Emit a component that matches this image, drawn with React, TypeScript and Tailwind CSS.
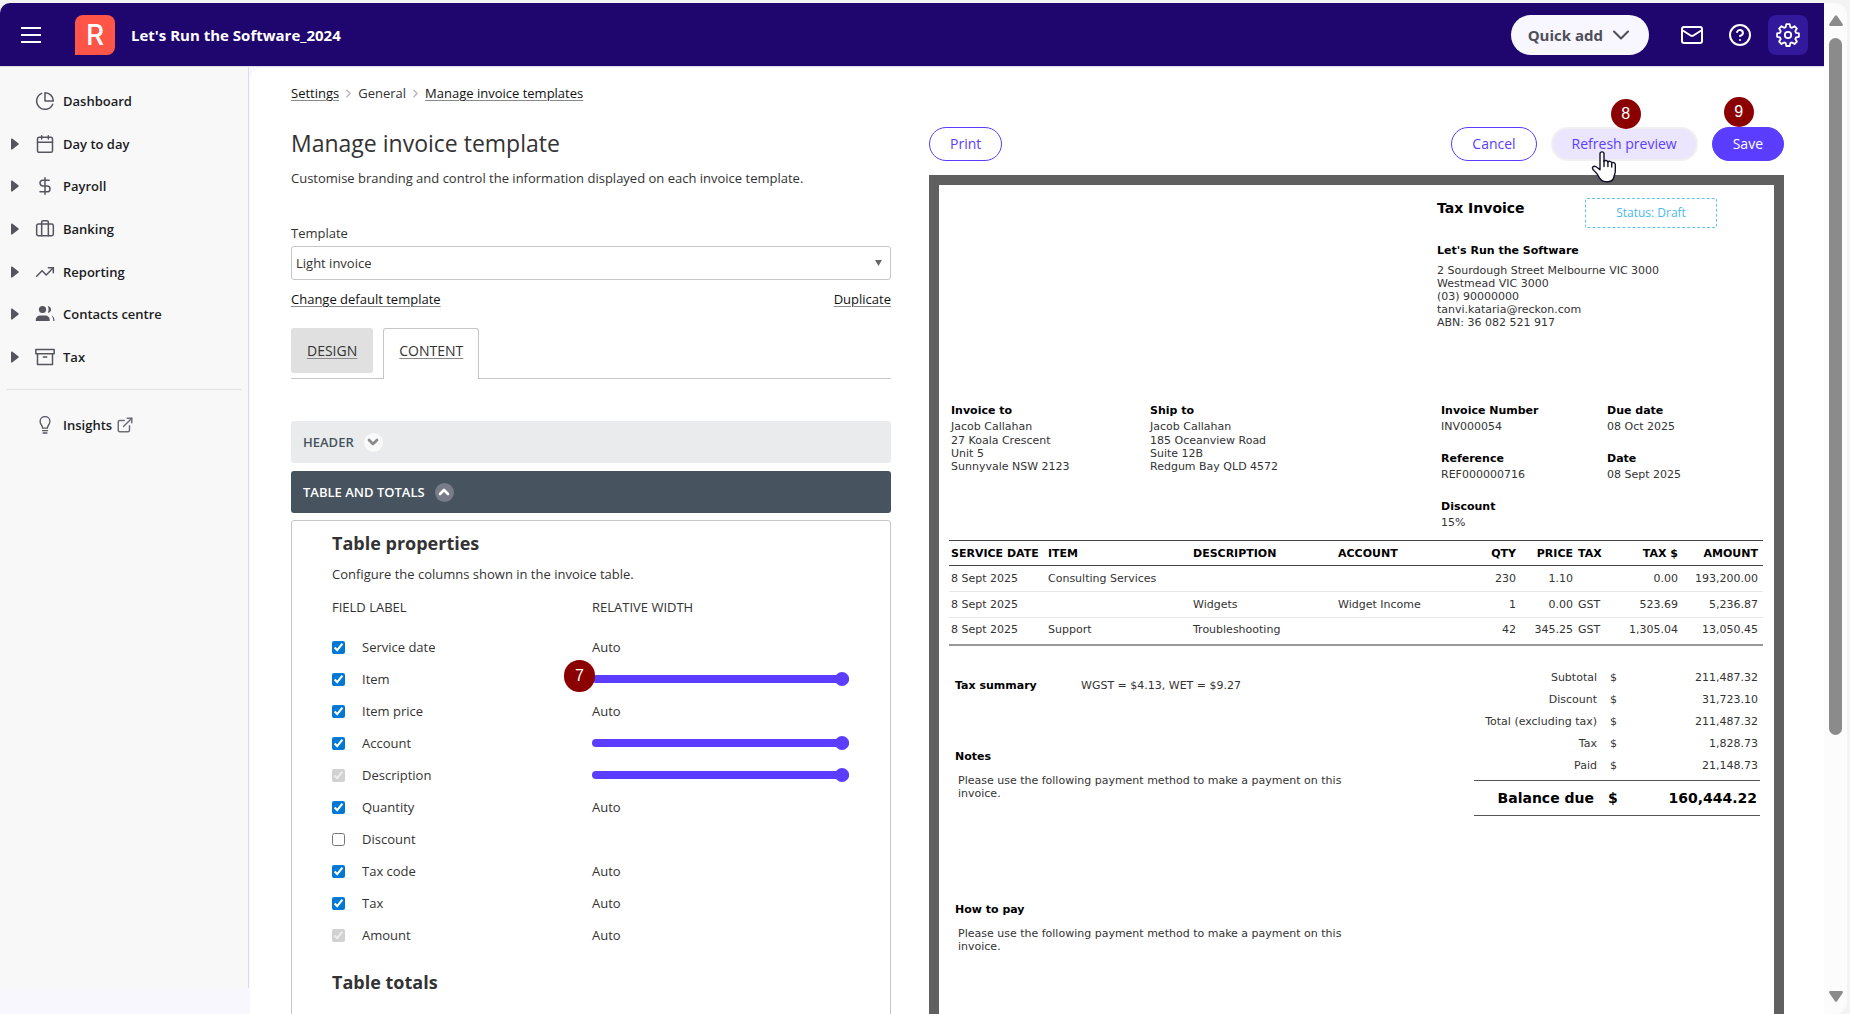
import {
	Briefcase,
	Calendar,
	ChevronDown,
	ChevronRight,
	ChevronUp,
	CircleQuestionMark,
	DollarSign,
	Mail,
	TrendingUp,
} from "lucide-react";
import { FiArchive, FiExternalLink, FiPieChart } from "react-icons/fi";

const navIcon = "size-5 shrink-0 text-[#55545f]";

const PeopleIcon = () => (
	<svg viewBox="0 0 20 20" className={navIcon} fill="currentColor" aria-hidden="true">
		<circle cx="7.500" cy="5.500" r="3.600" />
		<path d="M.8 17v-1.300c0-2.400 2-4.200 4.400-4.200h5.200c2.400 0 4.300 1.800 4.300 4.200V17z" />
		<path d="M12.800 2c2.200.3 3.200 1.800 3.200 3.600s-1 3.200-3.200 3.500c1.100-2.200 1.100-5 0-7.100z" />
		<path d="M16.600 11.500c1.900.9 2.900 2.700 2.900 5.500h-1.200c0-2.300-.5-4-1.700-5.500z" />
	</svg>
);

const BulbIcon = () => (
	<svg
		viewBox="0 0 20 20"
		className={navIcon}
		fill="none"
		stroke="currentColor"
		strokeWidth="1.3"
		strokeLinecap="round"
		aria-hidden="true"
	>
		<path d="M7.600 13.200c0-1.700-.6-2.600-1.500-3.700a5.200 5.200 0 0 1-1-3.200C5.100 3.600 7.200 1.700 10 1.700s4.900 1.900 4.900 4.600c0 1.300-.4 2.300-1 3.200-.9 1.100-1.500 2-1.500 3.700z" />
		<path d="M7.600 15.700h4.800M8.100 18h3.800" />
	</svg>
);

const GearIcon = () => (
	<svg
		viewBox="0 0 24 24"
		className="size-6"
		fill="none"
		stroke="currentColor"
		strokeWidth="1.8"
		strokeLinejoin="round"
		aria-hidden="true"
	>
		<circle cx="12" cy="12" r="3.200" />
		<path d="M10.300 1.200h3.400l.6 2.900 1.700.7 2.500-1.600 2.400 2.400-1.600 2.500.7 1.700 2.900.6v3.400l-2.900.6-.7 1.700 1.600 2.500-2.400 2.400-2.500-1.600-1.700.7-.6 2.900h-3.400l-.6-2.900-1.700-.7-2.500 1.600-2.400-2.400 1.600-2.500-.7-1.700-2.900-.6v-3.400l2.900-.6.7-1.700-1.600-2.500 2.400-2.400L8 4.800l1.700-.7z" />
	</svg>
);

const HandCursor = () => (
	<svg
		viewBox="0 0 26 32"
		className="pointer-events-none absolute left-10 top-6 z-10 h-8 w-[26px]"
		aria-hidden="true"
	>
		<path
			d="M9 2.800c0-2.600 4-2.600 4 0v7.700c.5-1.500 3.600-1.300 3.900.5.800-1.200 3.500-.8 3.800.8 1-.8 3.600-.2 3.600 1.700v6.500c0 3-1.200 4-1.600 6.500-.7 3-2.900 4.300-6.500 4.300-3.800 0-6-1-7.700-4-1.300-2.600-3-5-5.300-7-1.800-1.700-2.200-3-1.400-3.800 1.200-1.200 3.200-.6 4.700.7L9 18.800z"
			fill="#fff"
			stroke="#14122b"
			strokeWidth="1.4"
			strokeLinejoin="round"
		/>
		<path d="M13 10v5.500M16.900 11v4.500M20.700 12v4" stroke="#14122b" strokeWidth="1.4" strokeLinecap="round" />
	</svg>
);

const navItems = [
	{ label: "Dashboard", icon: <FiPieChart className={navIcon} strokeWidth={1.8} /> },
	{ label: "Day to day", icon: <Calendar className={navIcon} strokeWidth={1.8} />, nested: true },
	{ label: "Payroll", icon: <DollarSign className={navIcon} strokeWidth={1.8} />, nested: true },
	{ label: "Banking", icon: <Briefcase className={navIcon} strokeWidth={1.8} />, nested: true },
	{ label: "Reporting", icon: <TrendingUp className={navIcon} strokeWidth={1.8} />, nested: true },
	{ label: "Contacts centre", icon: <PeopleIcon />, nested: true },
	{ label: "Tax", icon: <FiArchive className={navIcon} strokeWidth={1.8} />, nested: true },
];

interface Field {
	label: string;
	width: "auto" | "slider" | "none";
	checked: boolean;
	locked?: boolean;
	step?: string;
}

const fields: Field[] = [
	{ label: "Service date", width: "auto", checked: true },
	{ label: "Item", width: "slider", checked: true, step: "7" },
	{ label: "Item price", width: "auto", checked: true },
	{ label: "Account", width: "slider", checked: true },
	{ label: "Description", width: "slider", checked: true, locked: true },
	{ label: "Quantity", width: "auto", checked: true },
	{ label: "Discount", width: "none", checked: false },
	{ label: "Tax code", width: "auto", checked: true },
	{ label: "Tax", width: "auto", checked: true },
	{ label: "Amount", width: "auto", checked: true, locked: true },
];

const lines = [
	["8 Sept 2025", "Consulting Services", "", "", "230", "1.10", "", "0.00", "193,200.00"],
	["8 Sept 2025", "", "Widgets", "Widget Income", "1", "0.00", "GST", "523.69", "5,236.87"],
	["8 Sept 2025", "Support", "Troubleshooting", "", "42", "345.25", "GST", "1,305.04", "13,050.45"],
];

const columns = [
	{ label: "SERVICE DATE", width: "w-[97px]" },
	{ label: "ITEM", width: "w-[145px]" },
	{ label: "DESCRIPTION", width: "w-[145px]" },
	{ label: "ACCOUNT", width: "w-[135px]" },
	{ label: "QTY", width: "w-[48px]", right: true },
	{ label: "PRICE", width: "w-[57px]", right: true },
	{ label: "TAX", width: "w-[45px]" },
	{ label: "TAX $", width: "w-[60px]", right: true },
	{ label: "AMOUNT", width: "w-[82px]", right: true },
];

const totals = [
	["Subtotal", "211,487.32"],
	["Discount", "31,723.10"],
	["Total (excluding tax)", "211,487.32"],
	["Tax", "1,828.73"],
	["Paid", "21,148.73"],
];

const cellClass = (index: number) => {
	if (index === 8) return "pr-[5px] text-right";
	return columns[index].right ? "px-[3px] text-right" : "px-[2px] text-left";
};

const StepBadge = ({ step, className }: { step: string; className: string }) => (
	<span
		className={`absolute z-10 flex items-center justify-center rounded-full bg-[#8b0000] font-['Liberation_Sans'] text-base text-white ${className}`}
	>
		{step}
	</span>
);

const TopBar = () => (
	<header className="flex h-16 shrink-0 items-center rounded-tl-[10px] border-b border-[#dcdbe6] bg-[#1f066e] text-[15px] text-white">
		<button type="button" aria-label="Toggle menu" className="ml-[21px] flex w-5 flex-col gap-[5px]">
			<span className="h-[2px] w-full bg-white" />
			<span className="h-[2px] w-full bg-white" />
			<span className="h-[2px] w-full bg-white" />
		</button>
		<span className="ml-[34px] flex size-10 items-center justify-center rounded-lg rounded-bl-none bg-[#ff5548] font-['Inter'] text-[28px] font-medium">
			R
		</span>
		<span className="ml-4 font-bold">Let&apos;s Run the Software_2024</span>
		<div className="ml-auto flex items-center pr-4">
			<button
				type="button"
				className="mr-[31px] flex h-10 items-center gap-1 rounded-full bg-[#f8f7ff] pl-[17px] pr-[14px] font-bold text-[#4f4e59]"
			>
				Quick add
				<ChevronDown className="size-7" strokeWidth={1.8} />
			</button>
			<button type="button" aria-label="Messages" className="mr-6">
				<Mail className="size-6" strokeWidth={2} />
			</button>
			<button type="button" aria-label="Help" className="mr-4">
				<CircleQuestionMark className="size-6" strokeWidth={2} />
			</button>
			<button
				type="button"
				aria-label="Settings"
				className="flex size-10 items-center justify-center rounded-lg bg-[#32189a]"
			>
				<GearIcon />
			</button>
		</div>
	</header>
);

const Sidebar = () => (
	<aside className="flex w-[250px] shrink-0 flex-col bg-[#f8f7fe] font-semibold text-[#1c1c24]">
		<nav className="mr-px flex-1 border-r border-[#dcdbe6] bg-[#f8f8f8] pt-[13px]">
			<ul className="flex h-[298px] flex-col">
				{navItems.map((item) => (
					<li key={item.label} className="flex flex-1 items-center">
						<a href="#" className="flex items-center pl-[11px]">
							<span className="w-6">
								{item.nested && (
									<svg viewBox="0 0 8 12" className="h-3 w-2 text-[#55545f]" fill="currentColor" aria-hidden="true">
										<path d="M0 1.500Q0 0 1.200.5L7.300 5.200Q8.200 6 7.300 6.800L1.200 11.500Q0 12 0 10.500z" />
									</svg>
								)}
							</span>
							{item.icon}
							<span className="ml-2">{item.label}</span>
						</a>
					</li>
				))}
			</ul>
			<hr className="mx-[7px] mt-[11px] border-[#e2e2e6]" />
			<a href="#" className="mt-[13px] flex h-[43px] items-center pl-[35px]">
				<BulbIcon />
				<span className="ml-2">Insights</span>
				<FiExternalLink className="ml-1 size-[18px] text-[#6f6e78]" />
			</a>
		</nav>
		<div className="h-[26px]" />
	</aside>
);

const linkClass = "underline decoration-[#8a8a8a] decoration-1 underline-offset-2";

const FieldRow = ({ field }: { field: Field }) => (
	<tr className="h-8">
		<td>
			<label className="flex items-center">
				<input
					type="checkbox"
					defaultChecked={field.checked}
					disabled={field.locked}
					className="mr-[17px] size-[13px] accent-[#0078d7]"
				/>
				{field.label}
			</label>
		</td>
		<td className="pr-[3px]">
			{field.width === "auto" && "Auto"}
			{field.width === "slider" && (
				<div className="relative flex items-center">
					<input
						type="range"
						defaultValue={100}
						aria-label={`${field.label} width`}
						className="h-[15px] w-full appearance-none bg-transparent [&::-webkit-slider-runnable-track]:h-2 [&::-webkit-slider-runnable-track]:rounded-full [&::-webkit-slider-runnable-track]:bg-[#5b3dff] [&::-webkit-slider-thumb]:-mt-[3px] [&::-webkit-slider-thumb]:size-[14px] [&::-webkit-slider-thumb]:appearance-none [&::-webkit-slider-thumb]:rounded-full [&::-webkit-slider-thumb]:bg-[#5b3dff]"
					/>
					{field.step && <StepBadge step={field.step} className="-left-7 -top-3 h-8 w-[31px]" />}
				</div>
			)}
		</td>
	</tr>
);

const TemplateForm = () => (
	<section>
		<h1 className="text-[23px] leading-8">Manage invoice template</h1>
		<p className="mt-[9px]">
			Customise branding and control the information displayed on each invoice template.
		</p>
		<label htmlFor="template" className="mt-[35px] block">
			Template
		</label>
		<div className="relative mt-[3px]">
			<select
				id="template"
				className="h-[34px] w-full appearance-none rounded-[3px] border border-[#c6c6c6] bg-white pl-1"
			>
				<option>Light invoice</option>
			</select>
			<svg
				viewBox="0 0 8 7"
				className="pointer-events-none absolute right-[9px] top-[14px] h-[6px] w-[7px]"
				aria-hidden="true"
			>
				<path d="M0 0h8L4 7z" fill="#666" />
			</svg>
		</div>
		<div className="mt-[9px] flex justify-between text-[#111]">
			<a href="#" className={linkClass}>
				Change default template
			</a>
			<a href="#" className={linkClass}>
				Duplicate
			</a>
		</div>
		<div className="mt-[19px] flex items-start gap-[10px] border-b border-[#c6c6c6] text-sm">
			<a href="#" className={`flex h-[45px] items-center rounded-[3px] bg-[#e0e0e0] px-4 ${linkClass}`}>
				DESIGN
			</a>
			<a
				href="#"
				className={`-mb-px flex h-[51px] items-center rounded-t-[3px] border border-b-0 border-[#c6c6c6] bg-white px-[15px] pb-[6px] ${linkClass}`}
			>
				CONTENT
			</a>
		</div>
		<button
			type="button"
			className="mt-[42px] flex h-[42px] w-full items-center rounded-[3px] bg-[#e9ebec] px-3 font-semibold text-[#47535f]"
		>
			HEADER
			<span className="ml-[10px] flex size-[19px] items-center justify-center rounded-full bg-[#fafafa] text-[#8a8a8a]">
				<ChevronDown className="size-4" strokeWidth={4} />
			</span>
		</button>
		<button
			type="button"
			className="mt-2 flex h-[42px] w-full items-center rounded-[3px] bg-[#47535f] px-3 font-semibold text-white"
		>
			TABLE AND TOTALS
			<span className="ml-[10px] flex size-[19px] items-center justify-center rounded-full bg-[#777c88]">
				<ChevronUp className="size-4" strokeWidth={4} />
			</span>
		</button>
		<div className="mt-[7px] rounded-t-[3px] border border-[#c6c6c6] pb-10 pl-10 pr-[38px] pt-[10px]">
			<h2 className="text-lg font-bold leading-6">Table properties</h2>
			<p className="mt-[9px]">Configure the columns shown in the invoice table.</p>
			<table className="mt-[13px] w-full table-fixed">
				<thead>
					<tr className="h-[34px] align-top">
						<th className="text-left font-normal">FIELD LABEL</th>
						<th className="text-left font-normal">RELATIVE WIDTH</th>
					</tr>
				</thead>
				<tbody>
					{fields.map((field) => (
						<FieldRow key={field.label} field={field} />
					))}
				</tbody>
			</table>
			<h2 className="mt-[19px] text-lg font-bold leading-6">Table totals</h2>
		</div>
	</section>
);

const Detail = ({ label, value }: { label: string; value: string }) => (
	<div className="mb-[19px]">
		<dt className="font-bold text-black">{label}</dt>
		<dd className="mt-[3px]">{value}</dd>
	</div>
);

const InvoicePreview = () => (
	<article className="mt-[14px] min-h-[900px] border-[10px] border-[#606060] bg-white pt-[13px] font-['DejaVu_Sans'] text-[11px] leading-[13px] text-[#333]">
		<div className="grid grid-cols-[498fr_337fr]">
			<div className="col-start-2">
				<div className="flex items-start">
					<h2 className="w-[148px] text-sm font-bold leading-5 text-black">Tax Invoice</h2>
					<span className="flex h-[30px] w-[132px] items-center justify-center rounded-[2px] border border-dashed border-[#62c4ee] font-['Open_Sans'] text-xs font-medium text-[#4cb9ec]">
						Status: Draft
					</span>
				</div>
				<h3 className="mt-4 font-bold text-black">Let&apos;s Run the Software</h3>
				<address className="mt-[7px] not-italic">
					2 Sourdough Street Melbourne VIC 3000
					<br />
					Westmead VIC 3000
					<br />
					(03) 90000000
					<br />
					tanvi.kataria@reckon.com
					<br />
					ABN: 36 082 521 917
				</address>
			</div>
		</div>
		<div className="mt-[75px] grid grid-cols-[199fr_291fr_166fr_167fr] pl-3">
			<div>
				<h3 className="font-bold text-black">Invoice to</h3>
				<p className="mt-[3px]">Jacob Callahan</p>
				<address className="mt-px not-italic">
					27 Koala Crescent
					<br />
					Unit 5
					<br />
					Sunnyvale NSW 2123
				</address>
			</div>
			<div>
				<h3 className="font-bold text-black">Ship to</h3>
				<p className="mt-[3px]">Jacob Callahan</p>
				<address className="mt-px not-italic">
					185 Oceanview Road
					<br />
					Suite 12B
					<br />
					Redgum Bay QLD 4572
				</address>
			</div>
			<dl>
				<Detail label="Invoice Number" value="INV000054" />
				<Detail label="Reference" value="REF000000716" />
				<Detail label="Discount" value="15%" />
			</dl>
			<dl>
				<Detail label="Due date" value="08 Oct 2025" />
				<Detail label="Date" value="08 Sept 2025" />
			</dl>
		</div>
		<div className="-mt-2 pl-[10px] pr-[11px]">
			<table className="w-full table-fixed border-collapse border-b-2 border-t border-b-[#999] border-t-[#444]">
				<thead>
					<tr className="h-[25px] border-b border-[#444] text-black">
						{columns.map((column, index) => (
							<th key={column.label} className={`whitespace-nowrap ${column.width} ${cellClass(index)}`}>
								{column.label}
							</th>
						))}
					</tr>
				</thead>
				<tbody>
					{lines.map((line) => (
						<tr
							key={line[8]}
							className="h-[26px] border-b border-[#e8e8e8] last:h-[27px] last:border-b-0 last:[&>td]:pb-[3px]"
						>
							{line.map((value, index) => (
								<td key={columns[index].label} className={`whitespace-nowrap ${cellClass(index)}`}>
									{value}
								</td>
							))}
						</tr>
					))}
				</tbody>
			</table>
		</div>
		<div className="grid grid-cols-[519fr_286fr] pl-4 pr-[14px]">
			<div className="pt-[33px]">
				<div className="flex">
					<h3 className="w-[126px] font-bold text-black">Tax summary</h3>
					<p>WGST = $4.13, WET = $9.27</p>
				</div>
				<h3 className="mt-[58px] font-bold text-black">Notes</h3>
				<p className="ml-[3px] mt-[11px] max-w-[400px]">
					Please use the following payment method to make a payment on this invoice.
				</p>
				<h3 className="mt-[103px] font-bold text-black">How to pay</h3>
				<p className="ml-[3px] mt-[11px] max-w-[400px]">
					Please use the following payment method to make a payment on this invoice.
				</p>
			</div>
			<div className="pt-[21px]">
				<table className="w-full border-collapse text-right">
					<tbody>
						{totals.map(([label, amount]) => (
							<tr key={label} className="h-[22px]">
								<th className="w-[123px] whitespace-nowrap font-normal">{label}</th>
								<td className="w-5">$</td>
								<td className="pr-[2px]">{amount}</td>
							</tr>
						))}
					</tbody>
				</table>
				<div className="mt-[3px] flex h-9 items-center border-y border-[#555] text-sm font-bold text-black">
					<span className="w-[120px] text-right">Balance due</span>
					<span className="ml-[14px]">$</span>
					<span className="ml-auto pr-[3px]">160,444.22</span>
				</div>
			</div>
		</div>
	</article>
);

const buttonClass = "h-[34px] rounded-full border px-5 text-sm";

const PreviewPane = () => (
	<section>
		<div className="flex gap-[14px]">
			<button type="button" className={`mr-auto border-[#5b3dff] text-[#5b3dff] ${buttonClass}`}>
				Print
			</button>
			<button type="button" className={`border-[#5b3dff] text-[#5b3dff] ${buttonClass}`}>
				Cancel
			</button>
			<div className="relative">
				<button
					type="button"
					className="h-[34px] rounded-full border-2 border-[#f0f0f0] bg-[#ebe6fe] px-[19px] text-sm text-[#5b3dff]"
				>
					Refresh preview
				</button>
				<StepBadge step="8" className="-top-7 left-[60px] size-[30px]" />
				<HandCursor />
			</div>
			<div className="relative">
				<button type="button" className={`border-[#5b3dff] bg-[#5b3dff] text-white ${buttonClass}`}>
					Save
				</button>
				<StepBadge step="9" className="-top-[30px] left-3 size-[30px]" />
			</div>
		</div>
		<InvoicePreview />
	</section>
);

const ScrollRail = () => (
	<div
		className="flex w-[23px] shrink-0 flex-col items-center rounded-r-[12px] bg-[#fcfcfc] pb-3 pt-3 text-[#8b8b8b]"
		aria-hidden="true"
	>
		<svg viewBox="0 0 14 11" className="h-[11px] w-[14px]" fill="currentColor">
			<path d="M6 .8q1-1.200 2 0l5.700 8.200q.6 2-1 2H1.300q-1.600 0-1-2z" />
		</svg>
		<div className="mt-3 w-[13px] flex-[698] rounded-full bg-[#8b8b8b]" />
		<div className="flex-[256]" />
		<svg viewBox="0 0 14 11" className="h-[11px] w-[14px]" fill="currentColor">
			<path d="M6 10.200q1 1.200 2 0L13.700 2q.6-2-1-2H1.300q-1.600 0-1 2z" />
		</svg>
	</div>
);

export default function App() {
	return (
		<div className="flex h-screen overflow-hidden bg-[#f3f3f3] pr-[3px] pt-[3px] font-['Open_Sans',sans-serif] text-[13px] leading-5 text-[#333]">
			<div className="flex min-w-0 flex-1 flex-col">
				<TopBar />
				<div className="flex min-h-0 flex-1 bg-[#f8f7fe]">
					<Sidebar />
					<main className="mt-px min-w-0 flex-1 overflow-hidden rounded-tl-[12px] bg-white pl-[41px] pr-10 pt-[15px]">
						<nav aria-label="Breadcrumb" className="flex items-center gap-[3px]">
							<a href="#" className={`text-[#111] ${linkClass}`}>
								Settings
							</a>
							<ChevronRight className="size-[13px] text-[#bbb]" strokeWidth={3} />
							<span>General</span>
							<ChevronRight className="size-[13px] text-[#bbb]" strokeWidth={3} />
							<a href="#" className={`text-[#111] ${linkClass}`}>
								Manage invoice templates
							</a>
						</nav>
						<div className="mt-6 grid grid-cols-[600fr_855fr] gap-[38px]">
							<TemplateForm />
							<PreviewPane />
						</div>
					</main>
				</div>
			</div>
			<ScrollRail />
		</div>
	);
}
